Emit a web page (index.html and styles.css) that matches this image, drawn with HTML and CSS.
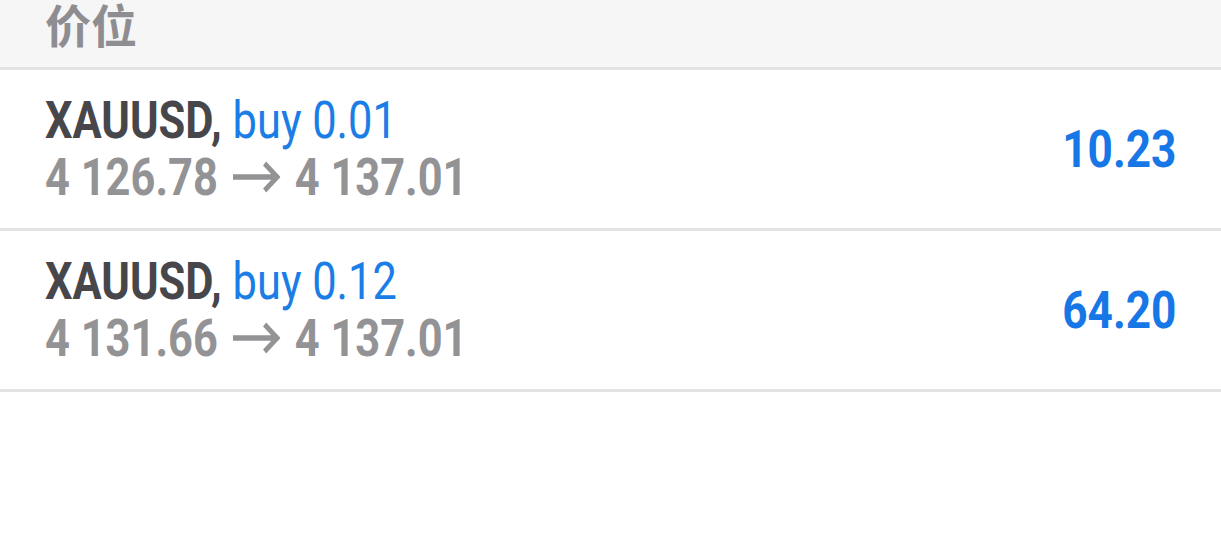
FILE: index.html
```html
<!DOCTYPE html>
<html lang="zh">
<head>
<meta charset="utf-8">
<link rel="stylesheet" href="styles.css">
</head>
<body>
<div class="page">
  <div class="header"><span class="header-title">价位</span></div>
  <div class="row">
    <div class="info">
      <div class="line"><span class="cond"><span class="sym">XAUUSD,</span> <span class="side">buy 0.01</span></span></div>
      <div class="line"><span class="cond prices">4 126.78<svg class="arrow" viewBox="0 0 57 32" width="57" height="32"><path d="M0 16H52M38 2.5L53 16L38 29.5" fill="none" stroke="#939396" stroke-width="5.5"/></svg>4 137.01</span></div>
    </div>
    <div class="profit"><span class="cond right">10.23</span></div>
  </div>
  <div class="row">
    <div class="info">
      <div class="line"><span class="cond"><span class="sym">XAUUSD,</span> <span class="side">buy 0.12</span></span></div>
      <div class="line"><span class="cond prices">4 131.66<svg class="arrow" viewBox="0 0 57 32" width="57" height="32"><path d="M0 16H52M38 2.5L53 16L38 29.5" fill="none" stroke="#939396" stroke-width="5.5"/></svg>4 137.01</span></div>
    </div>
    <div class="profit"><span class="cond right">64.20</span></div>
  </div>
</div>
</body>
</html>
```

FILE: styles.css
```css
html, body {
  margin: 0;
  padding: 0;
  background: #ffffff;
}
.page {
  width: 1221px;
  font-family: Roboto, "Liberation Sans", sans-serif;
}
.header {
  height: 67px;
  background: #f6f6f6;
  border-bottom: 3px solid #e3e3e3;
  padding-left: 45px;
  display: flex;
  align-items: flex-start;
}
.header-title {
  font-family: "Noto Sans CJK SC", sans-serif;
  font-weight: 700;
  font-size: 46px;
  line-height: 46px;
  color: #8e8e92;
}
.row {
  height: 158px;
  border-bottom: 3px solid #e3e3e3;
  padding: 0 45px 0 45px;
  display: flex;
  align-items: center;
  justify-content: space-between;
}
.info {
  display: flex;
  flex-direction: column;
}
.line {
  height: 57px;
  line-height: 57px;
  font-size: 52px;
  white-space: nowrap;
}
.cond {
  display: inline-block;
  transform: scaleX(0.835);
  transform-origin: left center;
}
.cond.right {
  transform: scaleX(0.85);
  transform-origin: right center;
}
.sym {
  font-weight: 700;
  color: #47464b;
}
.side {
  color: #1a7ee6;
}
.prices {
  font-weight: 700;
  color: #939396;
}
.arrow {
  display: inline-block;
  vertical-align: 2px;
  margin: 0 17px 0 18px;
}
.profit {
  font-size: 52px;
  line-height: 57px;
  font-weight: 700;
  color: #1877e6;
}
```
